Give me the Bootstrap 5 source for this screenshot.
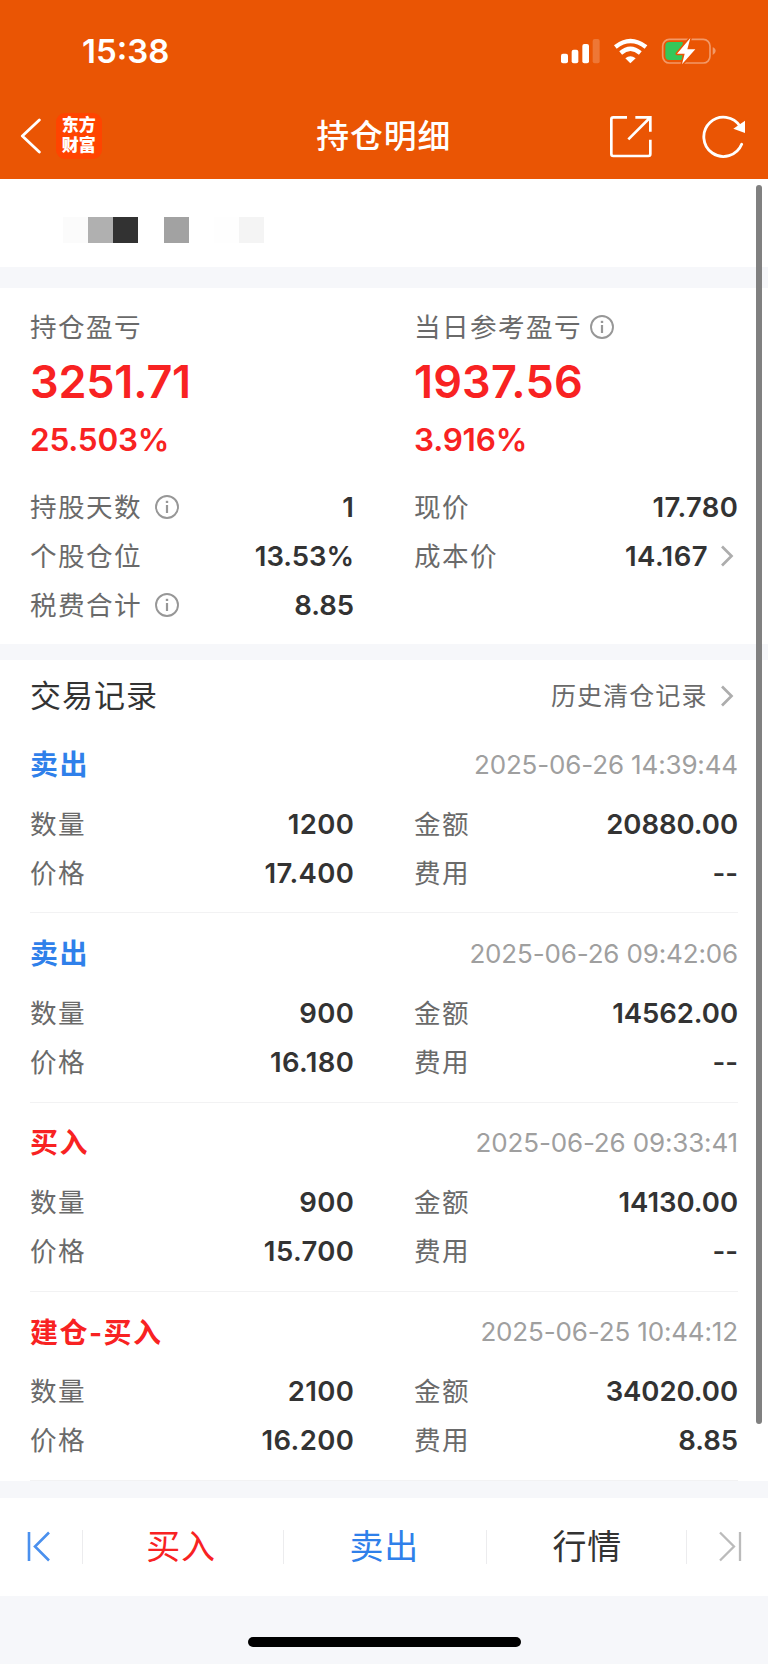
<!DOCTYPE html>
<html lang="zh-CN">
<head>
<meta charset="utf-8">
<meta name="viewport" content="width=device-width, initial-scale=1">
<title>持仓明细</title>
<link rel="stylesheet" href="https://cdn.jsdelivr.net/npm/bootstrap@5.3.0/dist/css/bootstrap.min.css">
<style>
  :root { --orange: #ea5504; --red: #f82222; --blue: #2f80ea; --ink: #333; --grey: #6a6a6a; --mute: #9f9f9f; --gap: #f6f7fa; }
  html, body { width: 768px; }
  body { font-family: Inter, "Noto Sans CJK SC", sans-serif; background: var(--gap); color: var(--ink); overflow: hidden; height: 1664px; }
  svg { display: block; flex: none; }
  .topbar { background: var(--orange); height: 179px; color: #fff; }
  .status-row { height: 93px; padding: 8px 50.7px 0 82px; }
  .clock { font-size: 33px; font-weight: 600; letter-spacing: 0; line-height: 86px; }
  .status-icons { margin-top: 28.7px; }
  .title-row { height: 86px; display: grid; grid-template-columns: 1fr auto 1fr; align-items: center; padding: 0 22px 0 20px; }
  .page-title { font-size: 32.8px; font-weight: 500; letter-spacing: 1px; line-height: 86px; padding-left: 1.5px; }
  .logo { width: 46.6px; height: 46.6px; border-radius: 9px; background: #ff4400; margin-left: 13.5px; padding-top: 3px; font: 900 17px/20px "Liberation Sans", "Noto Sans CJK SC", sans-serif; }
  .account { height: 88px; padding: 38.3px 0 0 63px; }
  .tile { width: 25.15px; height: 25.3px; }
  .summary { margin-top: 21px; height: 356px; padding-top: 19px; }
  .records { margin-top: 16px; height: 821px; padding-top: 8px; }
  .side { padding: 0 30px; }
  .caption { height: 40px; }
  .lbl { font-size: 26.6px; letter-spacing: 1.4px; color: var(--grey); line-height: 40px; white-space: nowrap; }
  .lbl + svg { margin-left: 13px; }
  .caption .lbl + svg { margin-left: 8px; }
  .big { font-size: 45px; font-weight: 600; line-height: 70px; color: var(--red); letter-spacing: -.2px; }
  .big.loose { letter-spacing: .15px; }
  .pct { font-size: 31.5px; font-weight: 600; line-height: 46px; color: var(--red); margin-bottom: 19px; letter-spacing: -.2px; }
  .line { height: 49px; }
  .num { font-size: 27.5px; font-weight: 600; letter-spacing: .4px; margin-right: -.4px; padding-top: 1.5px; }
  .num.tight { letter-spacing: -.05px; margin-right: 0; }
  .rec-title { height: 56px; }
  .rec-title h2 { font-size: 31px; font-weight: 400; letter-spacing: 1px; margin: 0; line-height: 56px; }
  .more { font-size: 25px; letter-spacing: 1.1px; color: var(--grey); padding-top: 1px; }
  .chev { margin: 0 4px 0 12.5px; }
  .record { padding-top: 5px; height: 189.25px; }
  .rule { height: 1px; background: #f2f2f3; margin: 15.25px 30px 0; }
  .rec-head { height: 70px; }
  .kind { font-size: 28px; font-weight: 700; letter-spacing: 1.5px; padding-top: 1.5px; }
  .when { font-size: 26px; color: var(--mute); letter-spacing: -.15px; }
  .red { color: var(--red); } .blue { color: var(--blue); }
  .dock { margin-top: 17px; height: 97.6px; }
  .dock > div { height: 34px; font-size: 34px; line-height: 34px; letter-spacing: .8px; }
  .dock > div + div { border-left: 1.5px solid #ececee; }
  .edge { width: 82px; }
  .buy { width: 201px; padding-right: 4px; } .sell { width: 202.5px; padding-right: 1px; } .quote { width: 200.5px; padding-left: 2px; }
  .first { margin-left: 27px; } .last { margin-left: 30.5px; }
  .home { width: 273.5px; height: 10px; border-radius: 5px; background: #000; margin: 41.4px 0 0 247.5px; }
  .thumb { position: absolute; left: 755.7px; top: 185px; width: 6.3px; height: 1239px; border-radius: 3.2px; background: #808080; }
</style>
</head>
<body>
<header class="topbar">
  <div class="status-row d-flex justify-content-between">
    <div class="clock">15:38</div>
    <svg class="status-icons" width="160" height="30" viewBox="520 110 480 90">
      <g fill="#fff">
        <rect x="532" y="160" width="21" height="29" rx="6"/><rect x="564" y="148" width="20" height="41" rx="6"/>
        <rect x="596" y="131" width="20" height="58" rx="6"/><rect x="627" y="116" width="21" height="73" rx="6" opacity=".2"/>
        <path d="M740 189L725 174Q740 161 756 174Z"/>
      </g>
      <path d="M695 140Q740 104 787 140M711 158Q740 133 770 158" fill="none" stroke="#fff" stroke-width="13"/>
      <rect x="837" y="117" width="142" height="71" rx="20" fill="none" stroke="#fff" stroke-opacity=".4" stroke-width="5"/>
      <path d="M987 141Q996 144 996 152T987 164Z" fill="#fff" opacity=".4"/>
      <path d="M857 125H897V179H857Q845 179 845 167V137Q845 125 857 125Z" fill="#34c759"/>
      <path d="M920 113L880 160H903L895 192L935 147H911Z" fill="#fff" stroke="#ea5504" stroke-width="9" paint-order="stroke" stroke-linejoin="round"/>
    </svg>
  </div>
  <div class="title-row">
    <div class="d-flex align-items-center">
      <svg width="22" height="36" viewBox="60 354 66 108"><path d="M118 360L67 408L118 456" fill="none" stroke="#fff" stroke-width="8.5" stroke-linecap="round" stroke-linejoin="round"/></svg>
      <div class="logo text-center">东方<br>财富</div>
    </div>
    <div class="page-title">持仓明细</div>
    <div class="d-flex justify-content-end align-items-center">
      <svg width="137" height="44" viewBox="675 342 411 132" fill="none" stroke="#fff">
        <path d="M729 352H688Q682 352 682 358V462Q682 468 688 468H793Q799 468 799 462V419M754 352H799V395M733 418L797 354" stroke-width="8"/>
        <path d="M1073 433A59 59 0 1 1 1069 380" stroke-width="8.5" stroke-linecap="round"/>
        <path d="M1083 362V399L1048 386Z" fill="#fff" stroke="none"/>
      </svg>
    </div>
  </div>
</header>

<section class="account bg-white d-flex">
  <div class="tile" style="background:#fbfbfb"></div><div class="tile" style="background:#b0b0b0"></div><div class="tile" style="background:#323232"></div>
  <div class="tile"></div><div class="tile" style="background:#a2a2a2"></div><div class="tile"></div>
  <div class="tile" style="background:#fefefe"></div><div class="tile" style="background:#f4f4f4"></div>
</section>

<section class="summary bg-white">
  <div class="row g-0">
    <div class="col-6 side">
      <div class="caption lbl">持仓盈亏</div>
      <div class="big">3251.71</div>
      <div class="pct">25.503%</div>
      <div class="line d-flex align-items-center"><span class="lbl">持股天数</span><svg width="24" height="24" viewBox="0 0 24 24"><use href="#i"/></svg><span class="num ms-auto">1</span></div>
      <div class="line d-flex align-items-center"><span class="lbl">个股仓位</span><span class="num tight ms-auto">13.53%</span></div>
      <div class="line d-flex align-items-center"><span class="lbl">税费合计</span><svg width="24" height="24" viewBox="0 0 24 24"><use href="#i"/></svg><span class="num tight ms-auto">8.85</span></div>
    </div>
    <div class="col-6 side">
      <div class="caption d-flex align-items-center"><span class="lbl">当日参考盈亏</span><svg width="24" height="24" viewBox="0 0 24 24">
        <g id="i" fill="none" stroke="#979797"><circle cx="12" cy="12" r="11" stroke-width="1.9"/><path d="M12 10V18" stroke-width="2.2"/><path d="M12 5.8V8" stroke-width="2.4"/></g></svg></div>
      <div class="big loose">1937.56</div>
      <div class="pct">3.916%</div>
      <div class="line d-flex align-items-center justify-content-between"><span class="lbl">现价</span><span class="num">17.780</span></div>
      <div class="line d-flex align-items-center"><span class="lbl">成本价</span><span class="num ms-auto">14.167</span><svg class="chev" width="14" height="22" viewBox="0 0 14 22"><path id="chev" d="M2 1.5L11.5 11L2 20.5" fill="none" stroke="#adadad" stroke-width="2.7"/></svg></div>
    </div>
  </div>
</section>

<section class="records bg-white">
  <div class="rec-title side d-flex align-items-center">
    <h2>交易记录</h2><span class="more ms-auto">历史清仓记录</span><svg class="chev" width="14" height="22" viewBox="0 0 14 22"><use href="#chev"/></svg>
  </div>
  <div id="list"></div>
</section>

<nav class="dock bg-white d-flex align-items-center">
  <div class="edge d-flex align-items-center"><svg class="first" width="24" height="32" viewBox="0 0 24 32"><path d="M2 1V30M22 1.5L8 15.5L22 29.5" fill="none" stroke="#4a90ee" stroke-width="2.6"/></svg></div>
  <div class="buy text-center red">买入</div>
  <div class="sell text-center blue">卖出</div>
  <div class="quote text-center">行情</div>
  <div class="edge d-flex align-items-center"><svg class="last" width="24" height="32" viewBox="0 0 24 32"><path d="M22 1V30M2 1.5L16 15.5L2 29.5" fill="none" stroke="#bbb" stroke-width="2.3"/></svg></div>
</nav>
<div class="home"></div>
<div class="thumb"></div>

<script src="https://cdn.jsdelivr.net/npm/bootstrap@5.3.0/dist/js/bootstrap.bundle.min.js"></script>
<script>
  const trades = [
    ['卖出', 'blue', '2025-06-26 14:39:44', '1200', '20880.00', '17.400', '--'],
    ['卖出', 'blue', '2025-06-26 09:42:06', '900', '14562.00', '16.180', '--'],
    ['买入', 'red', '2025-06-26 09:33:41', '900', '14130.00', '15.700', '--'],
    ['建仓-买入', 'red', '2025-06-25 10:44:12', '2100', '34020.00', '16.200', '8.85']
  ];
  const cell = (k, v, c = '') => `<div class="col-6 side line d-flex align-items-center justify-content-between"><span class="lbl">${k}</span><span class="num ${c}">${v}</span></div>`;
  document.getElementById('list').innerHTML = trades.map(t => `
    <article class="record">
      <div class="rec-head side d-flex align-items-center justify-content-between"><span class="kind ${t[1]}">${t[0]}</span><span class="when">${t[2]}</span></div>
      <div class="row g-0">${cell('数量', t[3])}${cell('金额', t[4], 'tight')}${cell('价格', t[5])}${cell('费用', t[6], 'tight')}</div>
      <div class="rule"></div>
    </article>`).join('');
</script>
</body>
</html>
